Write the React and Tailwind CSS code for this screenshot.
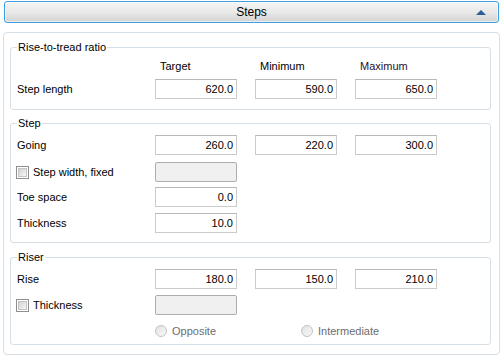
import React from 'react';

const COLS = 'grid grid-cols-[120px_82px_82px_82px] gap-x-[18px] items-center';

function Box({ value, disabled }) {
  if (disabled) {
    return <div className="h-[20px] w-[82px] rounded-[2px] border border-[#adadad] bg-[#f0f0f0]" />;
  }
  return (
    <div className="h-[20px] w-[82px] border border-[#cbcbcb] border-t-[#b9b9b9] bg-white pr-[3px] text-right leading-[18px]">
      {value}
    </div>
  );
}

function Check({ label }) {
  return (
    <div className="-ml-[1px] flex items-center gap-[3px]">
      <span className="flex h-[13px] w-[13px] items-center justify-center border border-[#8e8f8f] bg-white">
        <span className="h-[9px] w-[9px] border border-[#c4c4c4] bg-gradient-to-br from-[#d2d2d2] to-[#f6f6f6]" />
      </span>
      <span className="whitespace-nowrap pl-[1px]">{label}</span>
    </div>
  );
}

function Radio({ label }) {
  return (
    <div className="flex items-center gap-[5px] text-[#6d6d6d]">
      <span className="h-[12px] w-[12px] rounded-full border border-[#c3c3c3] bg-gradient-to-br from-[#e2e2e2] to-[#f9f9f9]" />
      <span>{label}</span>
    </div>
  );
}

function Row({ label, values, className = '' }) {
  return (
    <div className={`${COLS} ${className}`}>
      <div className="whitespace-nowrap">{label}</div>
      {values.map((v, i) => (
        <Box key={i} value={v} />
      ))}
    </div>
  );
}

function Group({ title, className = '', children }) {
  return (
    <fieldset className={`rounded-[3px] border border-[#d5dfe5] pl-[6px] ${className}`}>
      <legend className="px-[1px] leading-[13px]">{title}</legend>
      {children}
    </fieldset>
  );
}

export default function App() {
  return (
    <div
      className="h-[361px] w-[504px] overflow-hidden bg-white text-[11px] text-black"
      style={{ fontFamily: '"Liberation Sans", Arial, sans-serif' }}
    >
      <div className="ml-[4px] mt-[1px] h-[22px] w-[495px] rounded-[3px] border border-[#3d9fe0] bg-gradient-to-b from-[#f5f5f5] via-[#e9e9e9] to-[#d3d3d3] shadow-[inset_0_0_0_1px_rgba(255,255,255,0.6)]">
        <div className="relative flex h-full items-center justify-center text-[12px]">
          <span>Steps</span>
          <svg className="absolute right-[12px] top-[8px]" width="10" height="5" viewBox="0 0 10 5">
            <polygon points="0,5 10,5 5,0" fill="#2c5d93" />
          </svg>
        </div>
      </div>

      <div className="ml-[3px] mt-[9px] h-[323px] w-[497px] rounded-[4px] border border-[#d5dfe5] pl-[6px] pr-[8px]">
        <Group title="Rise-to-tread ratio" className="mt-[8px] pb-[10px]">
          <div className={`${COLS} mt-[6px] h-[13px] leading-[13px]`}>
            <div />
            <div className="pl-[5px]">Target</div>
            <div className="pl-[5px]">Minimum</div>
            <div className="pl-[5px] text-[#2d0f2d]">Maximum</div>
          </div>
          <Row label="Step length" values={['620.0', '590.0', '650.0']} className="mt-[6px]" />
        </Group>

        <Group title="Step" className="mt-[7px] pb-[9px]">
          <Row label="Going" values={['260.0', '220.0', '300.0']} className="mt-[5px]" />
          <div className={`${COLS} mt-[7px]`}>
            <Check label="Step width, fixed" />
            <Box disabled />
          </div>
          <Row label="Toe space" values={['0.0']} className="mt-[5px]" />
          <Row label="Thickness" values={['10.0']} className="mt-[6px]" />
        </Group>

        <Group title="Riser" className="mt-[8px] pb-[6px]">
          <Row label="Rise" values={['180.0', '150.0', '210.0']} className="mt-[5px]" />
          <div className={`${COLS} mt-[6px]`}>
            <Check label="Thickness" />
            <Box disabled />
          </div>
          <div className="mt-[9px] flex h-[14px] items-center">
            <div className="w-[138px]" />
            <div className="w-[146px]">
              <Radio label="Opposite" />
            </div>
            <Radio label="Intermediate" />
          </div>
        </Group>
      </div>
    </div>
  );
}
